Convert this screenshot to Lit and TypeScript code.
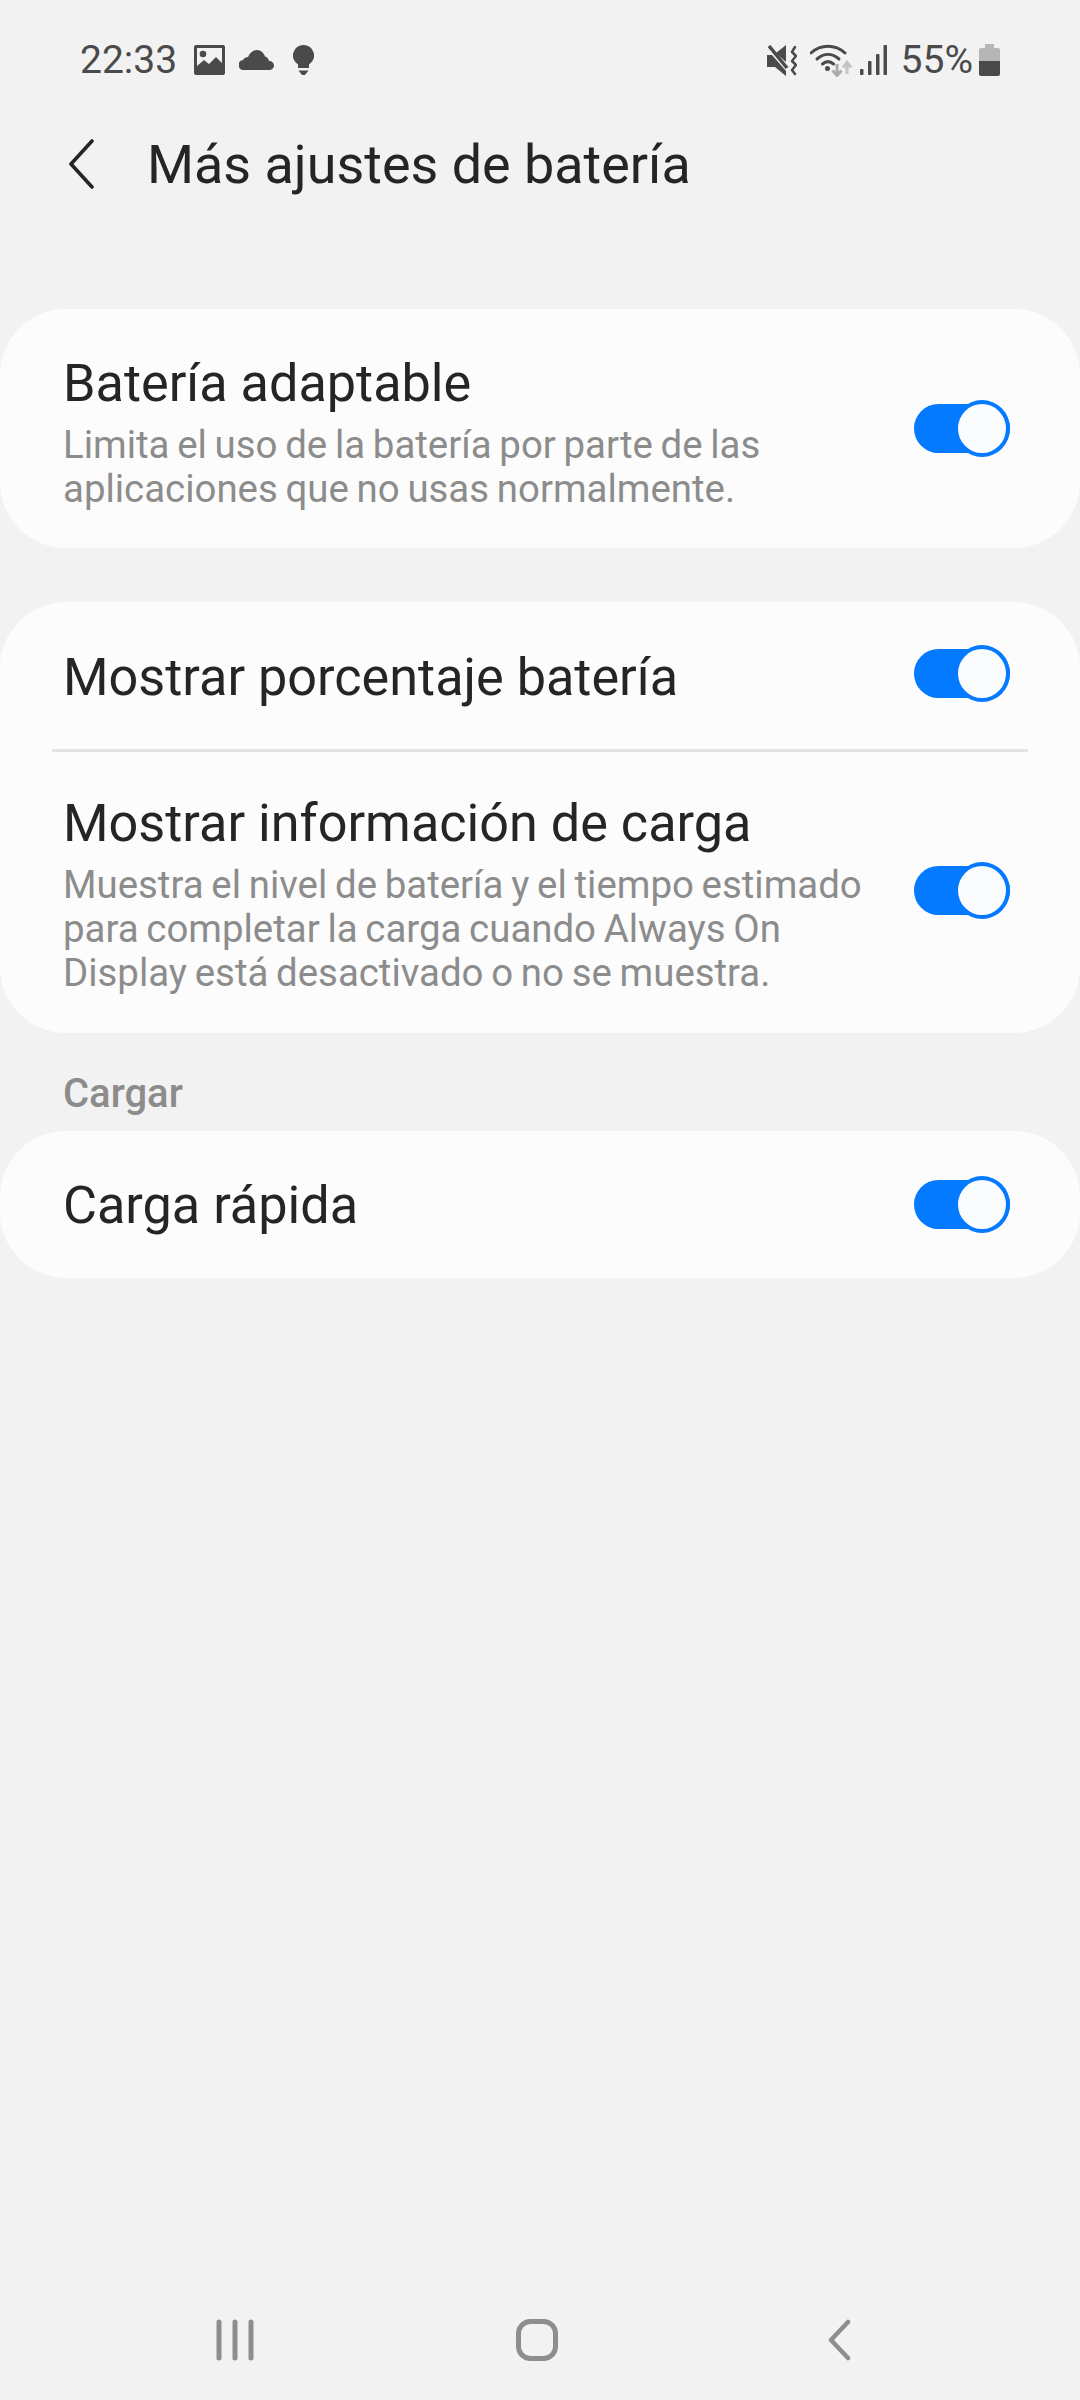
import { LitElement, html, css, svg } from "lit";
import { customElement } from "lit/decorators.js";

const toggle = html`<div class="toggle"><div class="thumb"></div></div>`;

@customElement("app-root")
export class AppRoot extends LitElement {
  static styles = css`
    :host {
      display: block;
      width: 1080px;
      height: 2400px;
      background: #f2f2f2;
      font-family: Roboto, "Noto Sans", sans-serif;
      overflow: hidden;
    }
    .page {
      height: 2400px;
      display: flex;
      flex-direction: column;
    }
    .status {
      height: 60px;
      padding: 0 80px;
      margin-top: 30px;
      display: flex;
      align-items: center;
      color: #4a4a4a;
      font-size: 39px;
    }
    .status svg {
      display: block;
      flex: none;
    }
    .spacer {
      flex: 1;
    }
    .header {
      height: 74px;
      margin-top: 37px;
      display: flex;
      align-items: center;
      padding-left: 67px;
    }
    .header h1 {
      margin: 0 0 0 52px;
      font-size: 53.9px;
      font-weight: 400;
      color: #252525;
    }
    .card {
      background: #fcfcfc;
      border-radius: 66px;
    }
    .first {
      margin-top: 108px;
    }
    .second {
      margin-top: 54px;
    }
    .row {
      display: flex;
      align-items: center;
      padding: 0 70px 0 63px;
      box-sizing: border-box;
    }
    .texts {
      flex: 1;
    }
    .title {
      font-size: 52.2px;
      line-height: 60px;
      color: #252525;
    }
    .sub {
      font-size: 38.4px;
      word-spacing: -1.8px;
      line-height: 44px;
      color: #8c8c8c;
      margin-top: 9px;
    }
    .a {
      height: 239px;
    }
    .a .texts {
      padding-top: 8px;
    }
    .b {
      height: 147px;
    }
    .b .texts {
      padding-top: 2px;
    }
    .second .b .texts {
      padding-top: 4px;
    }
    .second .b .toggle {
      margin-top: -4px;
    }
    .c {
      height: 281px;
    }
    .c .texts {
      padding-top: 3px;
    }
    .c .toggle {
      margin-top: -4px;
    }
    .divider {
      height: 3px;
      margin: 0 52px;
      background: #e3e3e3;
    }
    .label {
      height: 98px;
      padding: 22px 0 0 63px;
      box-sizing: border-box;
      display: flex;
      align-items: center;
      font-size: 40px;
      font-weight: 500;
      color: #8c8c8c;
    }
    .toggle {
      position: relative;
      width: 96px;
      height: 49px;
      background: #037aff;
      border-radius: 25px;
      flex: none;
    }
    .thumb {
      position: absolute;
      left: 40px;
      top: -4px;
      width: 48px;
      height: 49px;
      background: #fbfcfe;
      border: 4px solid #037aff;
      border-radius: 50%;
    }
    .nav {
      height: 150px;
      display: grid;
      grid-template-columns: repeat(3, 302px);
      align-items: start;
      padding: 69px 0 0 84px;
      box-sizing: border-box;
    }
    .nav .cell {
      display: flex;
      justify-content: center;
    }
    .nav svg {
      display: block;
    }
  `;

  render() {
    return html`
      <div class="page">
        <div class="status">
          <span>22:33</span>
          <svg style="margin-left:17px" width="31" height="30" viewBox="0 0 31 30">
            <path fill-rule="evenodd" fill="#4a4a4a" d="M2 0h27a2 2 0 0 1 2 2v26a2 2 0 0 1-2 2H2a2 2 0 0 1-2-2V2a2 2 0 0 1 2-2zM3 3v18l7-6 5 4 7-7 6 6V3z"/>
            <circle cx="9" cy="9" r="3.300" fill="#4a4a4a"/>
          </svg>
          <svg style="margin-left:14px" width="35" height="20" viewBox="0 0 35 20">
            <path fill="#4a4a4a" d="M5 20a5 5 0 0 1-1-10C5 8 7 7 9 7c2-4 5-7 9-7 4 0 7 3 8 6.500 2 .5 3.500 2 4 4.500a4.500 4.500 0 0 1 5 4.500c0 2.500-2 4.500-5 4.500z"/>
          </svg>
          <svg style="margin-left:19px" width="21" height="30" viewBox="0 0 21 30">
            <path fill="#4a4a4a" d="M10.500 0a10.500 10.500 0 0 1 5.500 19.500V23H5v-3.500A10.500 10.500 0 0 1 10.500 0z"/>
            <path fill="#4a4a4a" d="M5.500 25.500h10L12 30H9z"/>
          </svg>
          <div class="spacer"></div>
          <svg style="margin-right:13px" width="30" height="31" viewBox="0 0 30 31">
            <path fill="#4a4a4a" d="M0 10h5l14 16v5L8 22H0z"/>
            <path fill="#4a4a4a" d="M9 8l10-8v17z"/>
            <path fill="none" stroke="#4a4a4a" stroke-width="3.500" d="M2 1l18 22"/>
            <path fill="none" stroke="#4a4a4a" stroke-width="2.500" stroke-linecap="round" stroke-linejoin="round" d="M28 2l-3 5 4 4-4 5 4 4-4 5 3 4"/>
          </svg>
          <svg width="42" height="33" viewBox="0 0 42 33">
            <g fill="none" stroke="#4a4a4a" stroke-width="3" stroke-linecap="round">
              <path d="M1 9c10-9 24-9 34 0"/>
              <path d="M7 15c7-6 15-6 22 0"/>
              <path d="M12.500 20c3.500-3 7.500-3 11 0"/>
            </g>
            <circle cx="17.500" cy="24.500" r="2.500" fill="#4a4a4a"/>
            <path d="M27 20v11M22.500 26.500l4.500 5 4.500-5" fill="none" stroke="#ababab" stroke-width="3"/>
            <path d="M37 30V19M33 23.500l4-5 4 5" fill="none" stroke="#c4c4c4" stroke-width="3"/>
          </svg>
          <svg style="margin-left:8px" width="27" height="30" viewBox="0 0 27 30">
            <g fill="#4a4a4a">
              <rect x="0" y="24" width="3.500" height="6" rx="1"/>
              <rect x="8" y="16" width="3.500" height="14" rx="1"/>
              <rect x="16" y="9" width="3.500" height="21" rx="1"/>
              <rect x="23.500" y="0" width="3.500" height="30" rx="1"/>
            </g>
          </svg>
          <span style="margin-left:14px">55%</span>
          <svg style="margin-left:6px" width="21" height="32" viewBox="0 0 21 32">
            <path fill="#b6b6b6" d="M6 0h9v4h4a2 2 0 0 1 2 2v11H0V6a2 2 0 0 1 2-2h4z"/>
            <path fill="#4a4a4a" d="M0 17h21v13a2 2 0 0 1-2 2H2a2 2 0 0 1-2-2z"/>
          </svg>
        </div>
        <div class="header">
          <svg width="28" height="50" viewBox="0 0 28 50">
            <path d="M25 2L4 25l21 23" fill="none" stroke="#252525" stroke-width="3.600" stroke-linecap="round" stroke-linejoin="round"/>
          </svg>
          <h1>Más ajustes de batería</h1>
        </div>

        <div class="card first">
          <div class="row a">
            <div class="texts">
              <div class="title">Batería adaptable</div>
              <div class="sub">Limita el uso de la batería por parte de las<br />aplicaciones que no usas normalmente.</div>
            </div>
            ${toggle}
          </div>
        </div>

        <div class="card second">
          <div class="row b">
            <div class="texts"><div class="title">Mostrar porcentaje batería</div></div>
            ${toggle}
          </div>
          <div class="divider"></div>
          <div class="row c">
            <div class="texts">
              <div class="title">Mostrar información de carga</div>
              <div class="sub">Muestra el nivel de batería y el tiempo estimado<br />para completar la carga cuando Always On<br />Display está desactivado o no se muestra.</div>
            </div>
            ${toggle}
          </div>
        </div>

        <div class="label">Cargar</div>

        <div class="card">
          <div class="row b">
            <div class="texts"><div class="title">Carga rápida</div></div>
            ${toggle}
          </div>
        </div>

        <div class="spacer"></div>

        <div class="nav">
          <div class="cell">
            ${this.navIcon(svg`<path d="M3 3v36M19 3v36M35 3v36" fill="none" stroke="#8e8e8e" stroke-width="5" stroke-linecap="round"/>`, 38, 42)}
          </div>
          <div class="cell">
            ${this.navIcon(svg`<rect x="2.500" y="2.500" width="37" height="37" rx="12" fill="none" stroke="#8e8e8e" stroke-width="5"/>`, 42, 42)}
          </div>
          <div class="cell">
            ${this.navIcon(svg`<path d="M21 3L4 21l17 18" fill="none" stroke="#8e8e8e" stroke-width="4.500" stroke-linecap="round" stroke-linejoin="round"/>`, 24, 42)}
          </div>
        </div>
      </div>
    `;
  }

  navIcon(body: unknown, w: number, h: number) {
    return html`<svg width=${w} height=${h} viewBox="0 0 ${w} ${h}">${body}</svg>`;
  }
}
